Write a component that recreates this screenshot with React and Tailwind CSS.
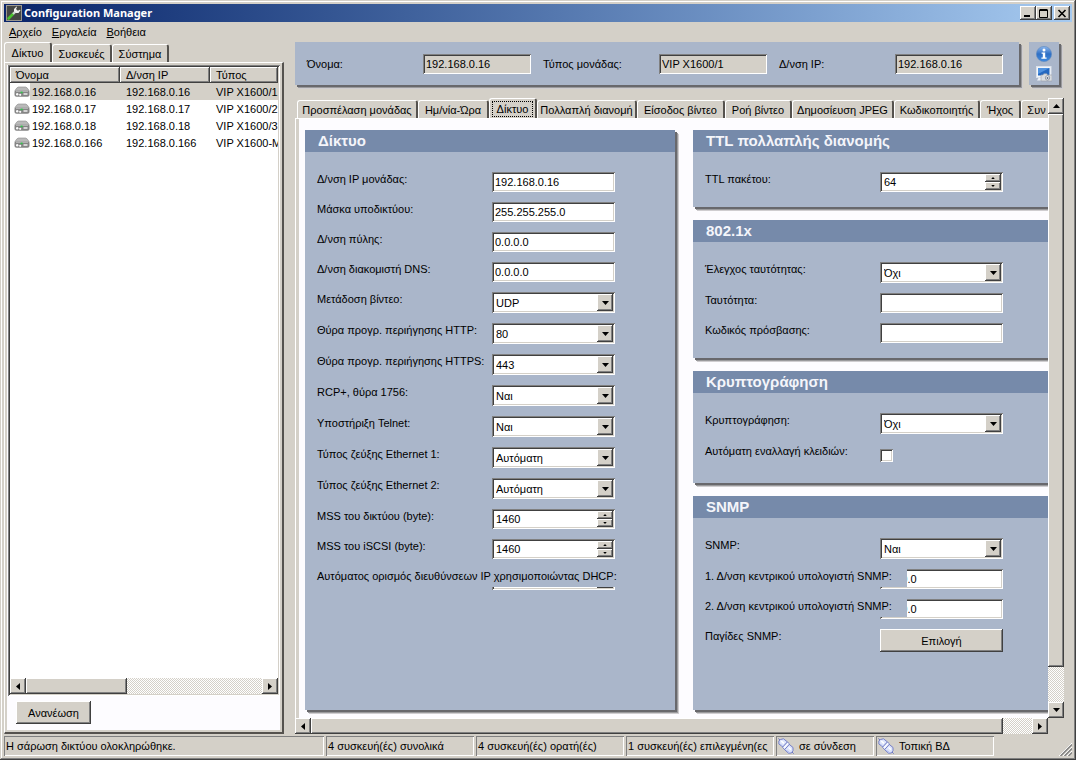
import { useState } from 'react';

const RAISED =
  'bg-[#d4d0c8] shadow-[inset_-1px_-1px_0_#404040,inset_1px_1px_0_#ffffff,inset_-2px_-2px_0_#808080]';
const SUNKEN =
  'shadow-[inset_1px_1px_0_#808080,inset_-1px_-1px_0_#ffffff,inset_2px_2px_0_#404040,inset_-2px_-2px_0_#d4d0c8]';
const DROP = 'shadow-[2px_2px_0_#68686c,3px_3px_0_#9a9a9c,4px_4px_0_#cfcdd0]';
const TRACK = 'bg-[repeating-conic-gradient(#ffffff_0_25%,#d4d0c8_0_50%)] bg-[length:2px_2px]';

const devices = [
  { name: '192.168.0.16', ip: '192.168.0.16', type: 'VIP X1600/1' },
  { name: '192.168.0.17', ip: '192.168.0.17', type: 'VIP X1600/2' },
  { name: '192.168.0.18', ip: '192.168.0.18', type: 'VIP X1600/3' },
  { name: '192.168.0.166', ip: '192.168.0.166', type: 'VIP X1600-M' },
];

const leftTabs = [
  { label: 'Δίκτυο', width: 'w-[48px]' },
  { label: 'Συσκευές', width: 'w-[60px]' },
  { label: 'Σύστημα', width: 'w-[57px]' },
];

const pageTabs = [
  { label: 'Προσπέλαση μονάδας', width: 'w-[121px]' },
  { label: 'Ημ/νία-Ώρα', width: 'w-[71px]' },
  { label: 'Δίκτυο', width: 'w-[48px]' },
  { label: 'Πολλαπλή διανομή', width: 'w-[100px]' },
  { label: 'Είσοδος βίντεο', width: 'w-[88px]' },
  { label: 'Ροή βίντεο', width: 'w-[67px]' },
  { label: 'Δημοσίευση JPEG', width: 'w-[102px]' },
  { label: 'Κωδικοποιητής', width: 'w-[86px]' },
  { label: 'Ήχος', width: 'w-[41px]' },
  { label: 'Συν', width: 'w-[32px]' },
];

const networkFields = [
  { id: 'ip', label: 'Δ/νση IP μονάδας:', kind: 'text', value: '192.168.0.16' },
  { id: 'mask', label: 'Μάσκα υποδικτύου:', kind: 'text', value: '255.255.255.0' },
  { id: 'gateway', label: 'Δ/νση πύλης:', kind: 'text', value: '0.0.0.0' },
  { id: 'dns', label: 'Δ/νση διακομιστή DNS:', kind: 'text', value: '0.0.0.0' },
  { id: 'video', label: 'Μετάδοση βίντεο:', kind: 'select', options: ['UDP', 'TCP'] },
  { id: 'http', label: 'Θύρα προγρ. περιήγησης HTTP:', kind: 'select', options: ['80'] },
  { id: 'https', label: 'Θύρα προγρ. περιήγησης HTTPS:', kind: 'select', options: ['443'] },
  { id: 'rcp', label: 'RCP+, θύρα 1756:', kind: 'select', options: ['Ναι', 'Όχι'] },
  { id: 'telnet', label: 'Υποστήριξη Telnet:', kind: 'select', options: ['Ναι', 'Όχι'] },
  { id: 'eth1', label: 'Τύπος ζεύξης Ethernet 1:', kind: 'select', options: ['Αυτόματη'] },
  { id: 'eth2', label: 'Τύπος ζεύξης Ethernet 2:', kind: 'select', options: ['Αυτόματη'] },
  { id: 'mss-net', label: 'MSS του δικτύου (byte):', kind: 'spin', value: '1460' },
  { id: 'mss-iscsi', label: 'MSS του iSCSI (byte):', kind: 'spin', value: '1460' },
  {
    id: 'dhcp',
    label: 'Αυτόματος ορισμός διευθύνσεων IP χρησιμοποιώντας DHCP:',
    kind: 'select',
    options: ['Όχι', 'Ναι'],
    cover: 'w-[320px]',
  },
];

const ttlFields = [{ id: 'ttl', label: 'TTL πακέτου:', kind: 'spin', value: '64' }];

const authFields = [
  { id: 'auth', label: 'Έλεγχος ταυτότητας:', kind: 'select', options: ['Όχι', 'Ναι'] },
  { id: 'identity', label: 'Ταυτότητα:', kind: 'text', value: '' },
  { id: 'password', label: 'Κωδικός πρόσβασης:', kind: 'text', value: '' },
];

const cryptoFields = [
  { id: 'crypto', label: 'Κρυπτογράφηση:', kind: 'select', options: ['Όχι', 'Ναι'] },
  { id: 'keys', label: 'Αυτόματη εναλλαγή κλειδιών:', kind: 'check' },
];

const snmpFields = [
  { id: 'snmp', label: 'SNMP:', kind: 'select', options: ['Ναι', 'Όχι'] },
  { id: 'host1', label: '1. Δ/νση κεντρικού υπολογιστή SNMP:', kind: 'text', value: '0.0.0.0', cover: 'w-[202px]' },
  { id: 'host2', label: '2. Δ/νση κεντρικού υπολογιστή SNMP:', kind: 'text', value: '0.0.0.0', cover: 'w-[202px]' },
  { id: 'traps', label: 'Παγίδες SNMP:', kind: 'button', value: 'Επιλογή' },
];

function Arrow({ dir, small }) {
  const points = {
    up: '0,4 7,4 3.5,0',
    down: '0,0 7,0 3.5,4',
    left: '4,0 4,7 0,3.5',
    right: '0,0 0,7 4,3.5',
  };
  const flat = dir === 'up' || dir === 'down';
  return (
    <svg
      viewBox={flat ? '0 0 7 4' : '0 0 4 7'}
      className={small ? 'h-[2px] w-[4px]' : flat ? 'h-[4px] w-[7px]' : 'h-[7px] w-[4px]'}
      aria-hidden="true"
    >
      <polygon points={points[dir]} fill="#000" />
    </svg>
  );
}

function WrenchIcon() {
  return (
    <svg viewBox="0 0 16 16" className="size-4 shrink-0" aria-hidden="true">
      <rect width="16" height="16" fill="#9a978f" />
      <rect x="1" y="1" width="14" height="14" fill="#454744" />
      <path d="M2.500 13.500 7 9" stroke="#49c22e" strokeWidth="2.600" strokeLinecap="round" />
      <path d="M7 9 10 6" stroke="#cfd6cf" strokeWidth="2.400" />
      <path d="M8 6.500V4l2.500-2.500.5.500-1 2 1.800 1.800 2-1 .7.500L12.500 8H10z" fill="#eef0ee" />
    </svg>
  );
}

function DeviceIcon() {
  return (
    <svg viewBox="0 0 16 12" className="h-[12px] w-4" aria-hidden="true">
      <path d="M4.500 1h7Q13 1 15 4.500v1H1v-1Q3 1 4.500 1z" fill="#b9b9b9" stroke="#8a8a8a" strokeWidth=".6" />
      <path d="M.5 6Q.5 4.500 2 4.500h12q1.500 0 1.500 1.500v3q0 1.500-2 1.800H2.500Q.5 10.500.5 9z" fill="#858585" />
      <path d="M2 5.200h12" stroke="#d6d6d6" strokeWidth=".8" />
      <circle cx="3.200" cy="8.300" r="1.200" fill="#fafafa" />
      <circle cx="6.200" cy="8.800" r="1.100" fill="#fafafa" />
      <rect x="6.600" y="5.600" width="2" height="1.600" fill="#2fc64a" />
      <rect x="9.500" y="7" width="4" height="2" fill="#d4d4d4" />
    </svg>
  );
}

function InfoIcon() {
  return (
    <svg viewBox="0 0 16 16" className="size-4" aria-hidden="true">
      <defs>
        <linearGradient id="info" x1="0" y1="0" x2="0" y2="1">
          <stop offset="0" stopColor="#8db8ee" />
          <stop offset=".5" stopColor="#2f6fc4" />
          <stop offset="1" stopColor="#3f8be0" />
        </linearGradient>
      </defs>
      <circle cx="8" cy="8" r="7.6" fill="url(#info)" stroke="#5a86c0" strokeWidth=".6" />
      <circle cx="8" cy="3.9" r="1.5" fill="#fff" />
      <path d="M5.6 6.4h3.6v5h1.4v1.4H5.4v-1.4h1.4V7.8H5.6z" fill="#fff" />
    </svg>
  );
}

function SnapshotIcon() {
  return (
    <svg viewBox="0 0 16 16" className="size-4" aria-hidden="true">
      <rect x=".5" y=".5" width="14.5" height="11" fill="#f3f6fa" stroke="#dbe2ec" />
      <rect x="2" y="2" width="11.500" height="7.500" fill="#2468c0" />
      <path d="M2 2h11.500L2 8z" fill="#4f92e0" />
      <path d="M2.500 12h4v2.500H1z" fill="#eef1f5" />
      <path d="M5 9h2l.8-1.200h3L11.500 9H16v6H5z" fill="#d9dde2" stroke="#9aa0a8" strokeWidth=".6" />
      <circle cx="11.500" cy="11.900" r="2.200" fill="#f4f6f8" stroke="#777d86" strokeWidth=".7" />
      <circle cx="11.500" cy="11.900" r="1" fill="#5d6b80" />
    </svg>
  );
}

function PlugIcon() {
  return (
    <svg viewBox="0 0 16 16" className="size-4 shrink-0" aria-hidden="true">
      <g stroke="#6a76c4" fill="#dde4fb" strokeWidth=".9" strokeLinejoin="round">
        <path d="M2.500 1.500 5.500.8 9.500 4 5 9 .9 6V3z" />
        <path d="M11 6.200 15 9.500v3L13.500 15l-3 .2L6.500 11.500z" />
        <path d="M9.500 4 11.600 6 6.600 11.600 4.500 9.200z" fill="#f6f8ff" />
      </g>
      <path d="M3.200 3 6 5.400M10.500 9.500l2.500 2.200" stroke="#fff" strokeWidth="1.600" />
      <path d="M2.500 6.500 4.500 8M8.500 12.500l2.500 1.700" stroke="#a9b6ee" />
      <path d="m14 14 1.700 1.700M.3.500 2 2" stroke="#6a76c4" />
    </svg>
  );
}

function Grip() {
  return (
    <svg viewBox="0 0 13 13" className="size-[13px]" aria-hidden="true">
      <path d="M0 13 13 0M4 13l9-9M8 13l5-5" stroke="#fff" />
      <path d="M1.5 13 13 1.5M5.5 13 13 5.5M9.5 13 13 9.5" stroke="#808080" strokeWidth="1.4" />
    </svg>
  );
}

function TitleButton({ label, children }) {
  return (
    <button type="button" aria-label={label} className={`flex h-[14px] w-4 items-center justify-center ${RAISED}`}>
      <svg viewBox="0 0 10 9" className="h-[9px] w-[10px]" aria-hidden="true" fill="none" stroke="#000">
        {children}
      </svg>
    </button>
  );
}

function Tabs({ tabs, active, onSelect, focusRing }) {
  return (
    <div role="tablist" className="flex h-5 shrink-0 items-end overflow-hidden">
      {tabs.map((tab, i) => (
        <button
          key={tab.label}
          type="button"
          role="tab"
          aria-selected={i === active}
          onClick={() => onSelect(i)}
          className={`flex shrink-0 items-center justify-center overflow-hidden rounded-t-[3px] border-t border-r-2 border-l border-t-white border-r-[#55524e] border-l-white whitespace-nowrap ${tab.width} ${
            i === active ? 'h-5' : 'h-[18px]'
          }`}
        >
          <span className={i === active && focusRing ? 'border border-dotted border-black px-1' : ''}>
            {tab.label}
          </span>
        </button>
      ))}
    </div>
  );
}

function ScrollBar({ vertical, thumb }) {
  const box = `flex size-4 shrink-0 items-center justify-center ${RAISED}`;
  return (
    <div className={`flex shrink-0 ${TRACK} ${vertical ? 'w-4 flex-col' : 'h-4'}`}>
      <button type="button" aria-label={vertical ? 'Πάνω' : 'Αριστερά'} className={box}>
        <Arrow dir={vertical ? 'up' : 'left'} />
      </button>
      <div className="min-h-0 min-w-0 flex-1">
        <div className={`${RAISED} ${thumb}`} />
      </div>
      <button type="button" aria-label={vertical ? 'Κάτω' : 'Δεξιά'} className={box}>
        <Arrow dir={vertical ? 'down' : 'right'} />
      </button>
    </div>
  );
}

function Control({ field }) {
  if (field.kind === 'select') {
    return (
      <div className={`relative h-[21px] bg-white ${SUNKEN}`}>
        <select id={field.id} className="h-full w-full appearance-none bg-transparent pr-5 pl-1 outline-none">
          {field.options.map((o) => (
            <option key={o}>{o}</option>
          ))}
        </select>
        <span
          className={`pointer-events-none absolute top-[2px] right-[2px] flex h-[17px] w-4 items-center justify-center ${RAISED}`}
        >
          <Arrow dir="down" />
        </span>
      </div>
    );
  }
  if (field.kind === 'spin') {
    return (
      <div className={`flex h-5 bg-white p-[2px] ${SUNKEN}`}>
        <input id={field.id} defaultValue={field.value} className="min-w-0 flex-1 bg-transparent pl-[2px] outline-none" />
        <div className="flex w-4 flex-col">
          <button type="button" aria-label="Αύξηση" className={`flex flex-1 items-center justify-center ${RAISED}`}>
            <Arrow dir="up" small />
          </button>
          <button type="button" aria-label="Μείωση" className={`flex flex-1 items-center justify-center ${RAISED}`}>
            <Arrow dir="down" small />
          </button>
        </div>
      </div>
    );
  }
  if (field.kind === 'check') {
    return (
      <div className="h-6 pt-[5px]">
        <input id={field.id} type="checkbox" className={`block size-[13px] appearance-none bg-white ${SUNKEN}`} />
      </div>
    );
  }
  if (field.kind === 'button') {
    return (
      <button id={field.id} type="button" className={`h-[23px] w-full ${RAISED}`}>
        {field.value}
      </button>
    );
  }
  return <input id={field.id} defaultValue={field.value} className={`h-5 w-full bg-white px-[3px] outline-none ${SUNKEN}`} />;
}

function Panel({ title, fields, className = '' }) {
  return (
    <section className={`bg-[#aab6ca] ${DROP} ${className}`}>
      <h2 className="h-[22px] bg-[#768aaa] pl-[13px] text-[15px] leading-[22px] font-bold text-[#f4f5fa]">{title}</h2>
      <div className="flex flex-col gap-[10px] px-3 pt-5 pb-[15px]">
        {fields.map((field) => (
          <div key={field.id} className="grid grid-cols-[175px_123px]">
            <label
              htmlFor={field.id}
              className={`h-[18px] leading-[14px] whitespace-nowrap ${field.cover ? `relative z-10 bg-[#aab6ca] ${field.cover}` : ''}`}
            >
              {field.label}
            </label>
            <Control field={field} />
          </div>
        ))}
      </div>
    </section>
  );
}

function InfoField({ id, label, value }) {
  return (
    <div className="flex items-center">
      <label htmlFor={id} className="w-[116px] whitespace-nowrap">
        {label}
      </label>
      <input id={id} readOnly value={value} className={`h-5 w-[108px] bg-[#d4d0c8] px-[3px] outline-none ${SUNKEN}`} />
    </div>
  );
}

function DeviceList() {
  const [selected, setSelected] = useState(0);
  const th = `h-4 px-[6px] text-left font-normal ${RAISED}`;

  return (
    <div className={`flex min-h-0 flex-1 flex-col bg-white p-[2px] ${SUNKEN}`}>
      <div className="min-h-0 flex-1 overflow-hidden">
        <table className="w-full table-fixed border-collapse">
          <colgroup>
            <col className="w-[110px]" />
            <col className="w-[90px]" />
            <col />
          </colgroup>
          <thead>
            <tr>
              <th className={th}>Όνομα</th>
              <th className={th}>Δ/νση IP</th>
              <th className={th}>Τύπος</th>
            </tr>
          </thead>
          <tbody>
            {devices.map((d, i) => (
              <tr key={d.name} onClick={() => setSelected(i)} className={i === selected ? 'bg-[#d4d0c8]' : ''}>
                <td className="h-[17px] p-0">
                  <div className="flex h-[17px] items-center">
                    <span className="flex h-full w-5 items-center bg-white pl-1">
                      <DeviceIcon />
                    </span>
                    <span className="pl-[2px]">{d.name}</span>
                  </div>
                </td>
                <td className="p-0 pl-[6px]">{d.ip}</td>
                <td className="overflow-hidden p-0 pl-[6px] whitespace-nowrap">{d.type}</td>
              </tr>
            ))}
          </tbody>
        </table>
      </div>
      <ScrollBar thumb="h-full w-[43%]" />
    </div>
  );
}

function StatusCell({ className, icon, children }) {
  return (
    <div
      className={`flex h-5 items-center gap-[5px] overflow-hidden pl-[2px] whitespace-nowrap shadow-[inset_1px_1px_0_#808080,inset_-1px_-1px_0_#ffffff] ${className}`}
    >
      {icon && <PlugIcon />}
      <span>{children}</span>
    </div>
  );
}

export default function App() {
  const [leftTab, setLeftTab] = useState(0);
  const [pageTab, setPageTab] = useState(2);

  return (
    <div className="flex h-screen flex-col overflow-hidden bg-[#d4d0c8] p-1 font-['Liberation_Sans',Arial,sans-serif] text-[11px] leading-[14px] text-black shadow-[inset_-1px_-1px_0_#404040,inset_1px_1px_0_#d4d0c8,inset_-2px_-2px_0_#808080,inset_2px_2px_0_#ffffff]">
      <header className="flex h-[18px] shrink-0 items-center bg-gradient-to-r from-[#0a246a] to-[#a6caf0] px-[2px] text-white">
        <WrenchIcon />
        <h1 className="flex-1 pl-[2px] font-['Noto_Sans',sans-serif] text-[11px] font-bold">Configuration Manager</h1>
        <TitleButton label="Ελαχιστοποίηση">
          <path d="M1 7h6" strokeWidth="2" />
        </TitleButton>
        <TitleButton label="Μεγιστοποίηση">
          <path d="M.5 1h8" strokeWidth="2" />
          <path d="M.5 1v7.500h8V1" />
        </TitleButton>
        <span className="w-[2px]" />
        <TitleButton label="Κλείσιμο">
          <path d="m1.500 1 7 7m0-7-7 7" strokeWidth="1.600" />
        </TitleButton>
      </header>

      <nav className="flex h-5 shrink-0 items-center gap-[10px] pl-[5px]">
        {['Αρχείο', 'Εργαλεία', 'Βοήθεια'].map((item) => (
          <button key={item} type="button">
            <span className="underline">{item[0]}</span>
            {item.slice(1)}
          </button>
        ))}
      </nav>

      <main className="flex min-h-0 flex-1">
        <aside className="flex w-[280px] shrink-0 flex-col">
          <Tabs tabs={leftTabs} active={leftTab} onSelect={setLeftTab} />
          <div className="flex min-h-0 flex-1 flex-col border-t border-r-2 border-b-2 border-l border-t-white border-r-[#55524e] border-b-[#55524e] border-l-white p-[2px]">
            <div className="flex min-h-0 flex-1 flex-col bg-[#fdfcff] pl-px">
              <DeviceList />
              <div className="px-2 pt-[5px] pb-[6px]">
                <button type="button" className={`h-[23px] w-[75px] ${RAISED}`}>
                  Ανανέωση
                </button>
              </div>
            </div>
          </div>
        </aside>

        <div className="flex min-w-0 flex-1 flex-col pr-2 pl-[11px]">
          <div className="flex shrink-0 gap-[10px] pr-[5px] pb-[13px]">
            <div className={`flex h-[43px] flex-1 gap-3 bg-[#aab6ca] pl-3 ${DROP}`}>
              <InfoField id="unit-name" label="Όνομα:" value="192.168.0.16" />
              <InfoField id="unit-type" label="Τύπος μονάδας:" value="VIP X1600/1" />
              <InfoField id="unit-ip" label="Δ/νση IP:" value="192.168.0.16" />
            </div>
            <div className={`flex h-[43px] w-[30px] flex-col items-center justify-center gap-1 bg-[#aab6ca] ${DROP}`}>
              <button type="button" aria-label="Πληροφορίες">
                <InfoIcon />
              </button>
              <button type="button" aria-label="Στιγμιότυπο">
                <SnapshotIcon />
              </button>
            </div>
          </div>

          <div className="flex min-h-0 flex-1">
            <div className="flex min-w-0 flex-1 flex-col">
              <div className="shrink-0 pl-[2px]">
                <Tabs tabs={pageTabs} active={pageTab} onSelect={setPageTab} focusRing />
              </div>
              <div className="flex min-h-0 flex-1 border-t border-l border-white pl-[3px]">
                <div className="flex min-w-0 flex-1 gap-[18px] overflow-hidden bg-[#fdfcff] pt-[11px] pb-2 pl-[6px]">
                  <Panel title="Δίκτυο" fields={networkFields} className="w-[370px] shrink-0" />
                  <div className="flex w-[370px] shrink-0 flex-col gap-[13px]">
                    <Panel title="TTL πολλαπλής διανομής" fields={ttlFields} />
                    <Panel title="802.1x" fields={authFields} />
                    <Panel title="Κρυπτογράφηση" fields={cryptoFields} />
                    <Panel title="SNMP" fields={snmpFields} className="flex-1" />
                  </div>
                </div>
              </div>
              <ScrollBar thumb="h-full w-[96%]" />
            </div>
            <div className="flex shrink-0 flex-col pb-4">
              <div className="flex min-h-0 flex-1">
                <ScrollBar vertical thumb="w-full h-[94%]" />
              </div>
            </div>
          </div>
        </div>
      </main>

      <footer className="flex shrink-0 items-end gap-[2px] pt-[2px]">
        <StatusCell className="w-[320px]">Η σάρωση δικτύου ολοκληρώθηκε.</StatusCell>
        <StatusCell className="w-[148px]">4 συσκευή(ές) συνολικά</StatusCell>
        <StatusCell className="w-[148px]">4 συσκευή(ές) ορατή(ές)</StatusCell>
        <StatusCell className="w-[148px]">1 συσκευή(ές) επιλεγμένη(ες</StatusCell>
        <StatusCell className="w-[98px]" icon>
          σε σύνδεση
        </StatusCell>
        <StatusCell className="w-[118px]" icon>
          Τοπική ΒΔ
        </StatusCell>
        <div className="flex flex-1 justify-end">
          <Grip />
        </div>
      </footer>
    </div>
  );
}
